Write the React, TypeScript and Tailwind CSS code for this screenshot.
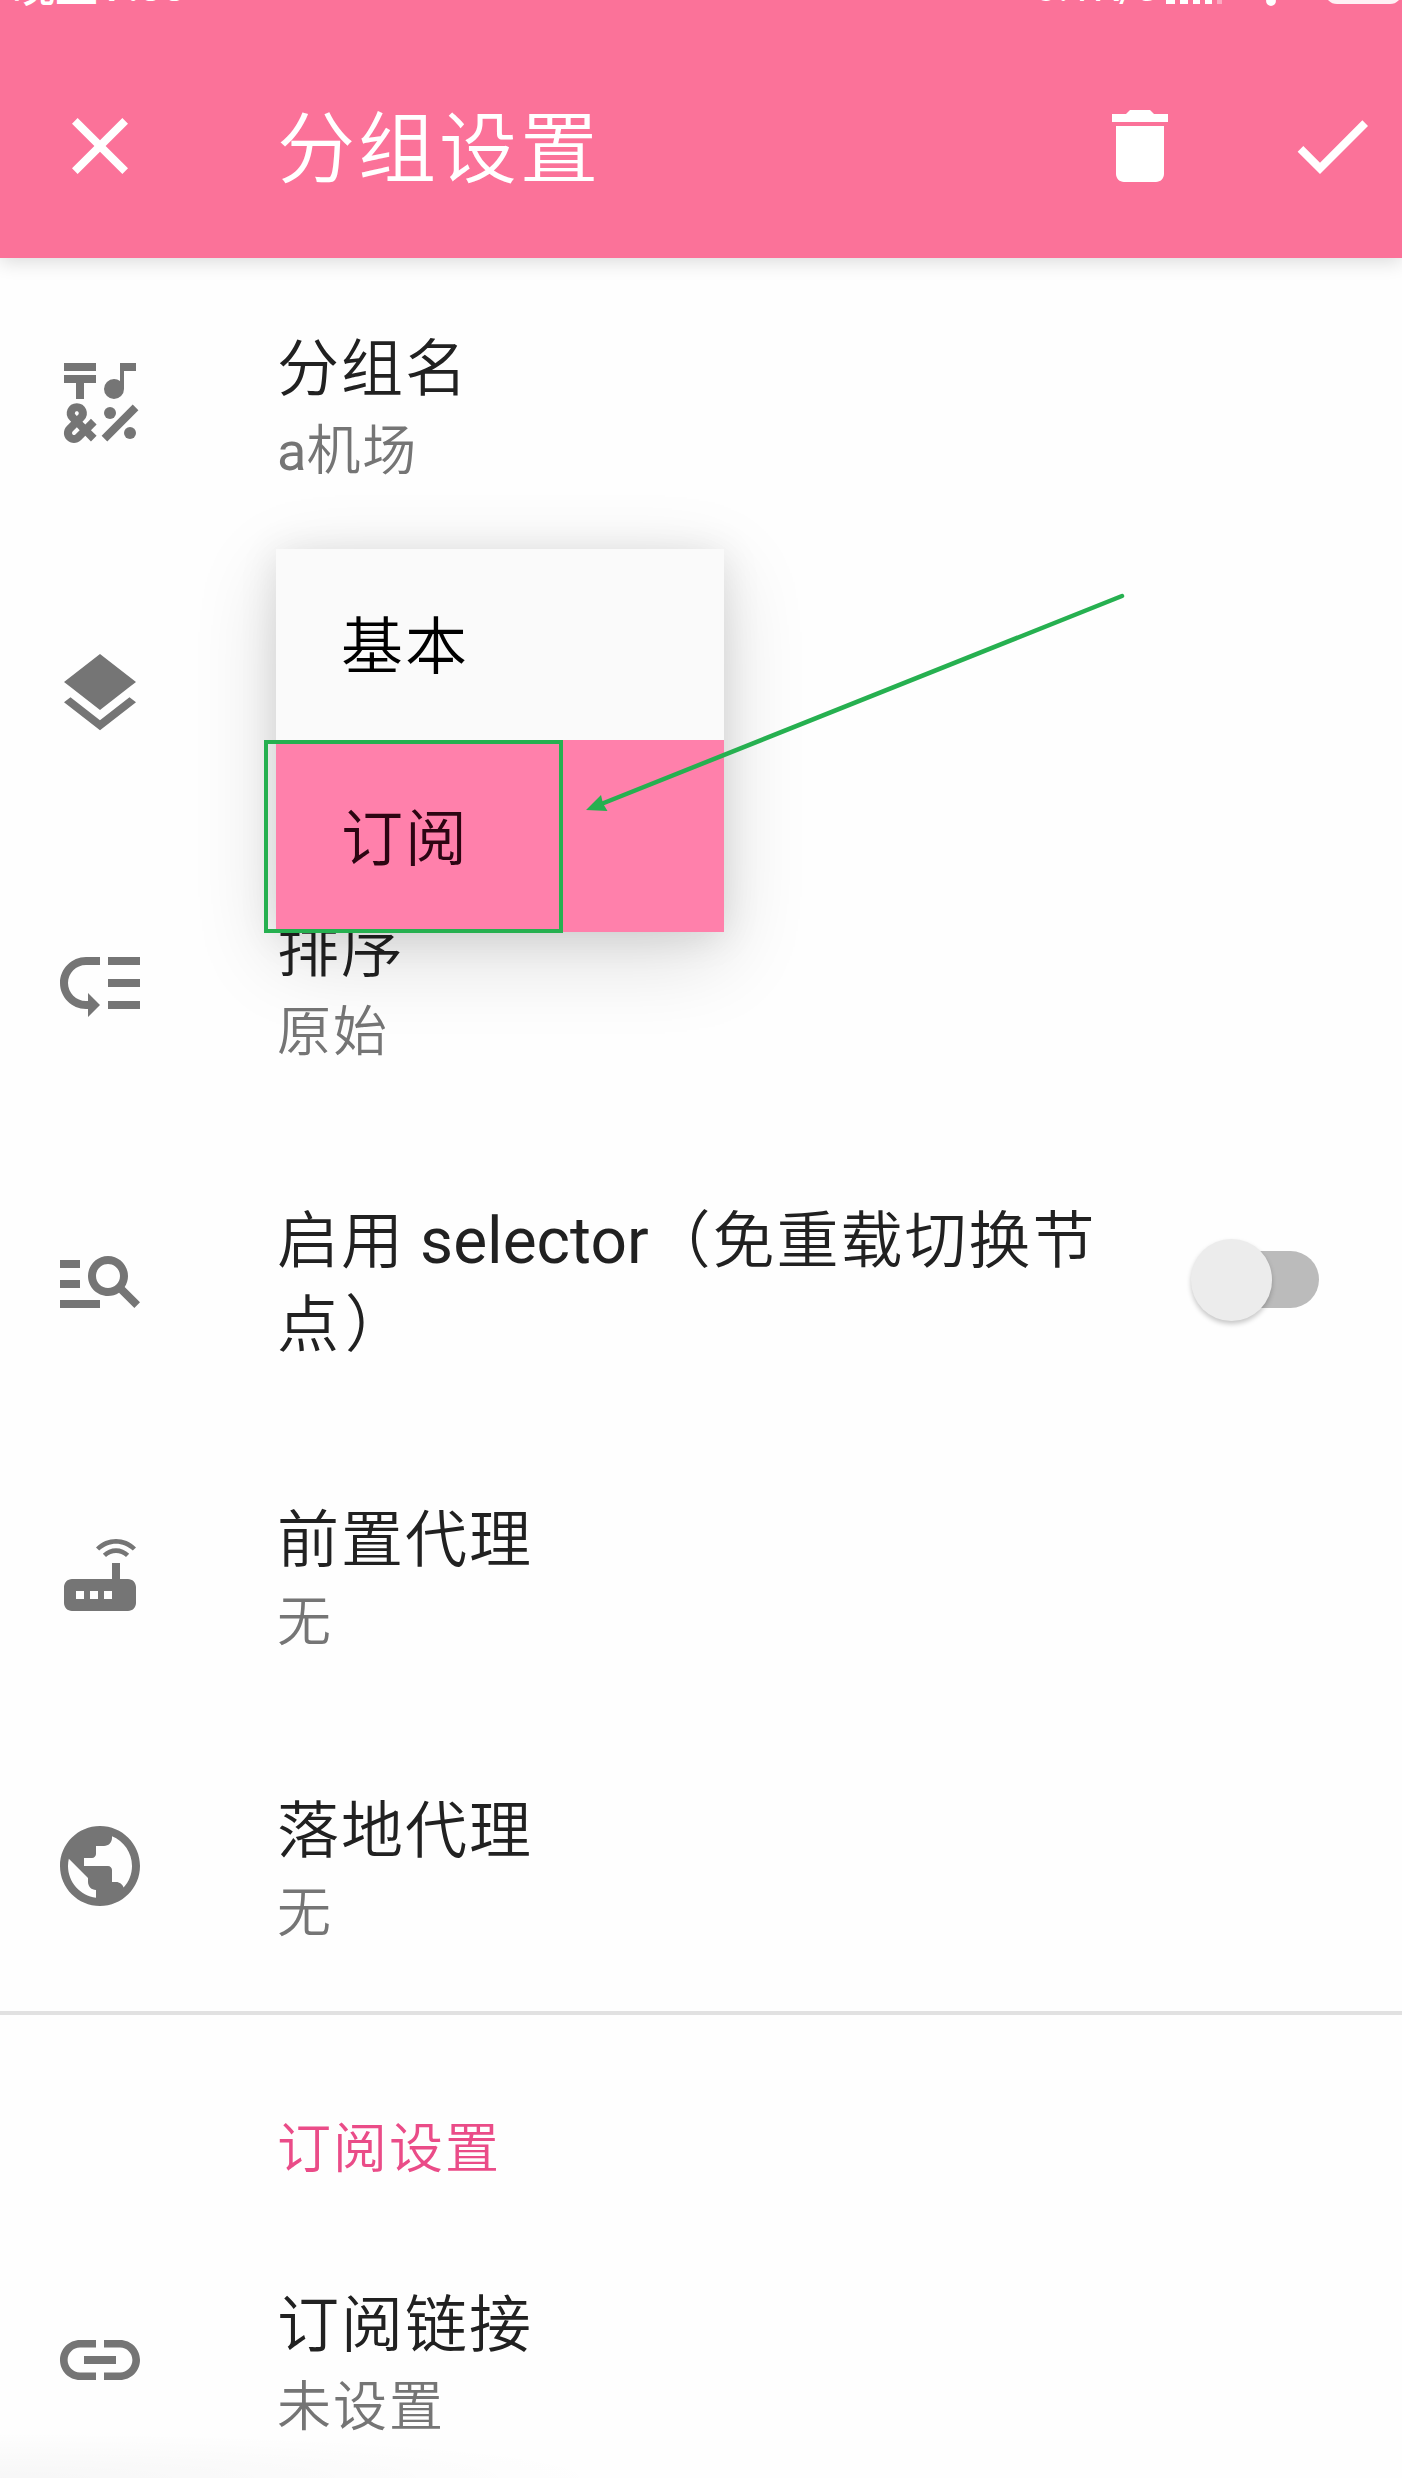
import type { ReactNode } from "react";
import {
  MdCheck,
  MdClose,
  MdDelete,
  MdEmojiSymbols,
  MdLayers,
  MdLink,
  MdLowPriority,
  MdManageSearch,
  MdPublic,
  MdRouter,
} from "react-icons/md";

function StatusBar() {
  return (
    <div className="relative h-[34px] overflow-hidden text-white">
      <div className="absolute bottom-[22px] left-[12px] flex h-[60px] w-[1390px] items-end leading-[60px]">
        <span className="translate-y-[5px] text-[43px] font-medium">晚上</span>
        <span className="ml-[6px] translate-y-[5px] text-[42px] font-medium">7:33</span>
        <span className="mb-[12px] ml-[40px] h-[20px] w-[20px] bg-white/60" />
        <span className="ml-auto translate-y-[5px] text-[42px]">0.1K/s</span>
        <span className="mb-[8px] ml-[8px] flex h-[36px] items-end gap-[5px]">
          <i className="h-[10px] w-[9px] bg-white" />
          <i className="h-[18px] w-[8px] bg-white" />
          <i className="h-[26px] w-[7px] bg-white" />
          <i className="h-[34px] w-[7px] bg-white" />
          <i className="h-[36px] w-[5px] bg-white/40" />
        </span>
        <svg className="mb-[5px] ml-[26px] h-[36px] w-[48px] shrink-0" viewBox="0 0 48 36" fill="none" stroke="#fff" strokeWidth="5" strokeLinecap="round">
          <path d="M4 12Q24-4 44 12M12 21Q24 12 36 21" />
          <circle cx="23" cy="30" r="2.400" fill="#fff" />
        </svg>
        <span className="mb-[8px] ml-[29px] h-[36px] w-[77px] shrink-0 rounded-[12px] border-[4px] border-white/90" />
      </div>
    </div>
  );
}

function Header() {
  return (
    <header className="relative z-10 h-[258px] bg-[#fb7299] text-white shadow-[0_4px_18px_rgba(0,0,0,0.14)]">
      <StatusBar />
      <div className="flex h-[224px] items-center pr-[22px] pl-[52px]">
        <MdClose className="size-[96px]" />
        <h1 className="mt-[9px] ml-[129px] text-[78px] leading-[100px] font-[350] tracking-[3px]">分组设置</h1>
        <MdDelete className="ml-auto size-[96px]" />
        <MdCheck className="ml-[96px] size-[96px]" />
      </div>
    </header>
  );
}

function Row({
  icon,
  title,
  summary,
  height,
  children,
}: {
  icon: ReactNode;
  title?: ReactNode;
  summary?: ReactNode;
  height: string;
  children?: ReactNode;
}) {
  return (
    <section className={`flex items-center pl-[52px] ${height}`}>
      <div className="size-[96px] shrink-0 text-[96px] text-[#757575]">{icon}</div>
      <div className={`ml-[129px] w-[840px] ${summary ? "pt-[13px]" : "pt-[8px]"}`}>
        {title && <div className="text-[62px] leading-[84px] font-[350] tracking-[2px] text-[#212121]">{title}</div>}
        {summary && <div className="text-[54px] leading-[80px] font-[350] tracking-[2px] text-[#757575]">{summary}</div>}
      </div>
      {children}
    </section>
  );
}

function Switch() {
  return (
    <div className="ml-[74px] flex h-[82px] w-[128px] items-center">
      <div className="z-10 h-[82px] w-[81px] shrink-0 rounded-full bg-[#ececec] shadow-[0_3px_5px_rgba(0,0,0,0.22)]" />
      <div className="-ml-[60px] h-[57px] w-[107px] shrink-0 rounded-full bg-[#bbbbbb]" />
    </div>
  );
}

function TypeMenu() {
  return (
    <div className="absolute top-[549px] left-[276px] w-[448px] bg-[#fafafa] text-[62px] font-[350] tracking-[2px] text-black shadow-[0_24px_80px_rgba(0,0,0,0.14),0_4px_36px_rgba(0,0,0,0.1)]">
      <div className="flex h-[191px] items-center pt-[6px] pl-[65px]">基本</div>
      <div className="flex h-[192px] items-center bg-[#ff80ab] pt-[6px] pl-[65px] text-[#2c0512]">订阅</div>
    </div>
  );
}

function Annotation() {
  return (
    <>
      <div className="absolute top-[740px] left-[264px] h-[193px] w-[299px] border-4 border-[#26b050]" />
      <svg className="absolute top-[580px] left-[570px] h-[240px] w-[570px]" viewBox="570 580 570 240">
        <path d="M1122 596L600 804.500" stroke="#26b050" strokeWidth="4.500" strokeLinecap="round" />
        <path d="M586 810L601 795L603 803.500L607.500 811Z" fill="#26b050" />
      </svg>
    </>
  );
}

export default function App() {
  return (
    <main className="relative h-[2478px] w-[1402px] overflow-hidden bg-[#fefefe] font-[Roboto,'Noto_Sans_CJK_SC',sans-serif]">
      <Header />
      <Row
        height="h-[290px]"
        icon={<MdEmojiSymbols />}
        title="分组名"
        summary={
          <>
            <span className="font-normal tracking-normal">a</span>机场
          </>
        }
      />
      <Row height="h-[291px]" icon={<MdLayers />} />
      <Row height="h-[291px]" icon={<MdLowPriority />} title="排序" summary="原始" />
      <Row
        height="h-[299px]"
        icon={<MdManageSearch />}
        title={
          <>
            启用 <span className="-ml-[2px] text-[64px] font-normal tracking-normal">selector</span>（免重载切换节点
            <span className="ml-[4px]">）</span>
          </>
        }
      >
        <Switch />
      </Row>
      <Row height="h-[291px]" icon={<MdRouter />} title="前置代理" summary="无" />
      <Row height="h-[291px]" icon={<MdPublic />} title="落地代理" summary="无" />
      <div className="h-[4px] bg-[#e1e1e1]" />
      <h2 className="flex h-[199px] items-center pt-[71px] pl-[277px] text-[54px] leading-[66px] font-[350] tracking-[2px] text-[#ea4c88]">
        订阅设置
      </h2>
      <Row height="h-[291px]" icon={<MdLink />} title="订阅链接" summary="未设置" />
      <TypeMenu />
      <Annotation />
      <div className="absolute bottom-0 left-0 h-[46px] w-[620px] bg-radial-[100%_100%_at_0%_100%] from-black/[0.03] to-transparent" />
    </main>
  );
}
